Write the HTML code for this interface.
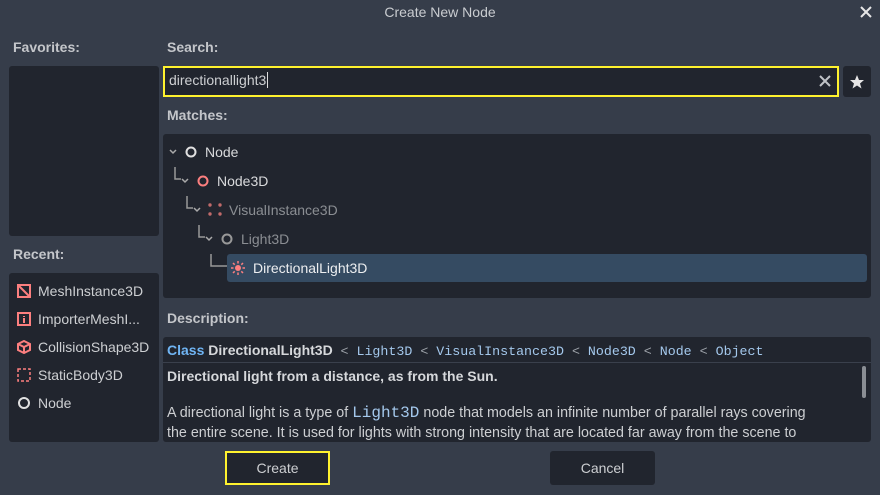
<!DOCTYPE html>
<html><head><meta charset="utf-8"><style>
*{margin:0;padding:0;box-sizing:border-box}
body{width:880px;height:495px;background:#363d4a;font-family:"Liberation Sans",sans-serif;color:#cdcfd2;font-size:14px;position:relative;overflow:hidden}
.a{position:absolute}
.p{position:absolute;background:#21252e;border-radius:3px}
.lbl{position:absolute;font-weight:bold;font-size:14px;color:#c4c6ca}
.row{position:absolute;height:28px;line-height:28px;white-space:nowrap}
.mono{font-family:"Liberation Mono",monospace;font-size:13.3px;color:#a4c8ec}
</style></head><body>
<div class="a" style="left:0;top:4px;width:880px;text-align:center;font-size:14px;color:#c9ccd0">Create New Node</div>
<svg class="a" style="left:860px;top:6px" width="12" height="12"><path d="M1 1L11 11M11 1L1 11" stroke="#e6e6e6" stroke-width="2"/></svg>

<div class="lbl" style="left:13px;top:39px">Favorites:</div>
<div class="p" style="left:9px;top:66px;width:150px;height:170px"></div>
<div class="lbl" style="left:13px;top:246px">Recent:</div>
<div class="p" style="left:9px;top:273px;width:150px;height:169px"></div>
<svg class="a" style="left:17px;top:284px" width="14" height="14"><rect x="1" y="1" width="12" height="12" fill="none" stroke="#fc7f7f" stroke-width="2"/><path d="M2 2L12 12" stroke="#fc7f7f" stroke-width="2"/></svg>
<div class="row" style="left:38px;top:277px">MeshInstance3D</div>
<svg class="a" style="left:17px;top:312px" width="14" height="14"><rect x="1" y="1" width="12" height="12" fill="none" stroke="#fc7f7f" stroke-width="2"/><path d="M7 4V5M7 6V11" stroke="#fc7f7f" stroke-width="2"/></svg>
<div class="row" style="left:38px;top:305px">ImporterMeshI...</div>
<svg class="a" style="left:17px;top:340px" width="14" height="14"><path d="M7 1L13 4V10L7 13L1 10V4Z M1 4L7 7L13 4 M7 7V13" fill="none" stroke="#fc7f7f" stroke-width="2"/></svg>
<div class="row" style="left:38px;top:333px">CollisionShape3D</div>
<svg class="a" style="left:17px;top:368px" width="14" height="14"><rect x="1" y="1" width="12" height="12" fill="none" stroke="#fc7f7f" stroke-width="1.5" stroke-dasharray="3 2"/></svg>
<div class="row" style="left:38px;top:361px">StaticBody3D</div>
<svg class="a" style="left:17px;top:396px" width="14" height="14"><circle cx="7" cy="7" r="5" fill="none" stroke="#e0e0e0" stroke-width="2"/></svg>
<div class="row" style="left:38px;top:389px">Node</div>

<div class="lbl" style="left:167px;top:39px">Search:</div>
<div class="a" style="left:163px;top:66px;width:676px;height:31px;background:#21252e;border:2px solid #fff22e"></div>
<div class="a" style="left:169px;top:72px;font-size:14px">directionallight3<span style="border-left:1px solid #ddd;margin-left:1px"></span></div>
<svg class="a" style="left:819px;top:75px" width="12" height="12"><path d="M1 1L11 11M11 1L1 11" stroke="#bfc2c6" stroke-width="2"/></svg>
<div class="p" style="left:843px;top:66px;width:28px;height:31px"></div>
<svg class="a" style="left:849px;top:74px" width="16" height="15"><path d="M8 1L10 6L15 6L11 9.5L12.5 14.5L8 11.5L3.5 14.5L5 9.5L1 6L6 6Z" fill="#e6e6e6"/></svg>

<div class="lbl" style="left:167px;top:107px">Matches:</div>
<div class="p" style="left:163px;top:134px;width:708px;height:164px"></div>
<svg class="a" style="left:163px;top:134px" width="220" height="164" fill="none">
<path d="M7 16L10 19L13 16" stroke="#aaa" stroke-width="1.5"/>
<circle cx="28" cy="18" r="4.5" stroke="#e0e0e0" stroke-width="2"/>
<path d="M12 33V45H18" stroke="#999" stroke-width="1.5"/>
<path d="M19 45L22 48L25 45" stroke="#aaa" stroke-width="1.5"/>
<circle cx="40" cy="47" r="4.5" stroke="#fc7f7f" stroke-width="2"/>
<path d="M24 62V74H30" stroke="#999" stroke-width="1.5"/>
<path d="M31 74L34 77L37 74" stroke="#aaa" stroke-width="1.5"/>
<g fill="#c06a6a"><circle cx="47" cy="71" r="1.7"/><circle cx="57" cy="71" r="1.7"/><circle cx="47" cy="80" r="1.7"/><circle cx="57" cy="80" r="1.7"/></g>
<path d="M36 91V103H42" stroke="#999" stroke-width="1.5"/>
<path d="M43 103L46 106L49 103" stroke="#aaa" stroke-width="1.5"/>
<circle cx="64" cy="105" r="4.5" stroke="#999" stroke-width="2"/>
<path d="M48 120V132H64" stroke="#999" stroke-width="1.5"/>
</svg>
<div class="a" style="left:227px;top:254px;width:640px;height:28px;background:#354b62;border-radius:3px"></div>
<svg class="a" style="left:231px;top:261px" width="14" height="14"><circle cx="7" cy="7" r="3" fill="#fc7f7f"/><g stroke="#fc7f7f" stroke-width="1.5"><path d="M7 0V2.5M7 11.5V14M0 7H2.5M11.5 7H14M2 2L3.7 3.7M10.3 10.3L12 12M12 2L10.3 3.7M3.7 10.3L2 12"/></g></svg>
<div class="row" style="left:205px;top:138px;color:#d9dadc">Node</div>
<div class="row" style="left:217px;top:167px;color:#d9dadc">Node3D</div>
<div class="row" style="left:229px;top:196px;color:#8b8e93">VisualInstance3D</div>
<div class="row" style="left:241px;top:225px;color:#8b8e93">Light3D</div>
<div class="row" style="left:253px;top:254px;color:#eceef0">DirectionalLight3D</div>

<div class="lbl" style="left:167px;top:310px">Description:</div>
<div class="p" style="left:163px;top:337px;width:708px;height:105px"></div>
<div class="a" style="left:163px;top:362px;width:708px;height:1px;background:#3a404c"></div>
<div class="row" style="left:167px;top:337px;height:26px;line-height:26px"><b style="color:#70b5f4">Class</b> <b style="color:#d6d8db">DirectionalLight3D</b>&nbsp; <span class="mono"><span style="color:#9ea3aa">&lt;</span> Light3D <span style="color:#9ea3aa">&lt;</span> VisualInstance3D <span style="color:#9ea3aa">&lt;</span> Node3D <span style="color:#9ea3aa">&lt;</span> Node <span style="color:#9ea3aa">&lt;</span> Object</span></div>
<div class="a" style="left:167px;top:368px;font-weight:bold;color:#d6d8db">Directional light from a distance, as from the Sun.</div>
<div class="a" style="left:167px;top:403px;width:690px;line-height:20px;font-size:14.3px;color:#cdcfd2;white-space:nowrap">A directional light is a type of <span style="font-family:'Liberation Mono',monospace;color:#a4c8ec;font-size:16px">Light3D</span> node that models an infinite number of parallel rays covering<br>the entire scene. It is used for lights with strong intensity that are located far away from the scene to</div>
<div class="a" style="left:862px;top:366px;width:4px;height:32px;background:#8a8e94;border-radius:2px"></div>

<div class="a" style="left:225px;top:451px;width:105px;height:34px;background:#21252e;border:2px solid #fff22e;text-align:center;line-height:30px">Create</div>
<div class="a" style="left:550px;top:451px;width:105px;height:34px;background:#21252e;border-radius:3px;text-align:center;line-height:34px">Cancel</div>
</body></html>
